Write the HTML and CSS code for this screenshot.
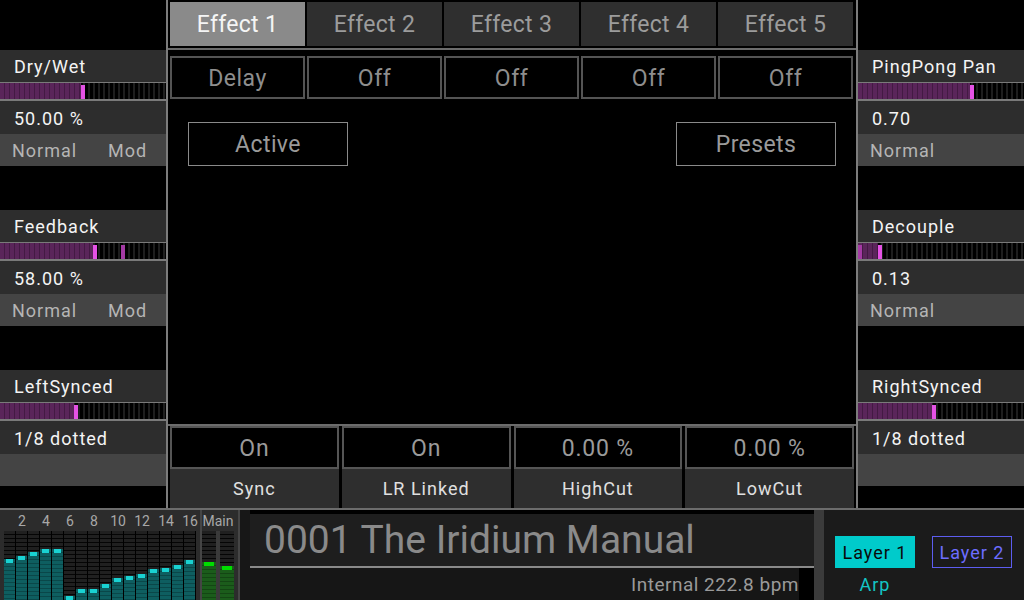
FILE: index.html
```html
<!DOCTYPE html>
<html>
<head>
<meta charset="utf-8">
<title>Effect</title>
<link rel="stylesheet" href="styles.css">
</head>
<body>
<div class="app">
  <div class="main">
    <aside class="side">
      <div class="param">
        <div class="p-label">Dry/Wet</div>
        <div class="slider"><div class="fill" style="width:81px"></div><div class="knob" style="left:81px"></div></div>
        <div class="p-value">50.00 %</div>
        <div class="p-mode"><span>Normal</span><span>Mod</span></div>
      </div>
      <div class="param">
        <div class="p-label">Feedback</div>
        <div class="slider"><div class="fill" style="width:93px"></div><div class="knob" style="left:93px"></div><div class="knob mod" style="left:121px"></div></div>
        <div class="p-value">58.00 %</div>
        <div class="p-mode"><span>Normal</span><span>Mod</span></div>
      </div>
      <div class="param">
        <div class="p-label">LeftSynced</div>
        <div class="slider"><div class="fill" style="width:74px"></div><div class="knob" style="left:74px"></div></div>
        <div class="p-value">1/8 dotted</div>
        <div class="p-mode"></div>
      </div>
    </aside>
    <div class="vline"></div>
    <section class="center">
      <nav class="tabs">
        <div class="tab active">Effect 1</div>
        <div class="tab">Effect 2</div>
        <div class="tab">Effect 3</div>
        <div class="tab">Effect 4</div>
        <div class="tab">Effect 5</div>
      </nav>
      <div class="rule"></div>
      <div class="types">
        <div class="type">Delay</div>
        <div class="type">Off</div>
        <div class="type">Off</div>
        <div class="type">Off</div>
        <div class="type">Off</div>
      </div>
      <div class="actions">
        <div class="btn">Active</div>
        <div class="btn">Presets</div>
      </div>
      <div class="spacer"></div>
      <div class="params">
        <div class="pcol"><div class="pval">On</div><div class="pname">Sync</div></div>
        <div class="pcol"><div class="pval">On</div><div class="pname">LR Linked</div></div>
        <div class="pcol"><div class="pval">0.00 %</div><div class="pname">HighCut</div></div>
        <div class="pcol"><div class="pval">0.00 %</div><div class="pname">LowCut</div></div>
      </div>
    </section>
    <div class="vline"></div>
    <aside class="side">
      <div class="param">
        <div class="p-label">PingPong Pan</div>
        <div class="slider"><div class="fill" style="width:112px"></div><div class="knob" style="left:112px"></div></div>
        <div class="p-value">0.70</div>
        <div class="p-mode"><span>Normal</span></div>
      </div>
      <div class="param">
        <div class="p-label">Decouple</div>
        <div class="slider"><div class="fill" style="width:20px"></div><div class="knob mod" style="left:0px"></div><div class="knob" style="left:20px"></div></div>
        <div class="p-value">0.13</div>
        <div class="p-mode"><span>Normal</span></div>
      </div>
      <div class="param">
        <div class="p-label">RightSynced</div>
        <div class="slider"><div class="fill" style="width:74px"></div><div class="knob" style="left:74px"></div></div>
        <div class="p-value">1/8 dotted</div>
        <div class="p-mode"></div>
      </div>
    </aside>
  </div>
  <div class="hline"></div>
  <footer class="bottom">
    <div class="meters">
      <div class="channels">
        <div class="nums">
          <span></span><span>2</span><span></span><span>4</span><span></span><span>6</span><span></span><span>8</span>
          <span></span><span>10</span><span></span><span>12</span><span></span><span>14</span><span></span><span>16</span>
        </div>
        <div class="bars">
          <div class="bar"><div class="lvl" style="height:41px"></div></div>
          <div class="bar"><div class="lvl" style="height:44px"></div></div>
          <div class="bar"><div class="lvl" style="height:48px"></div></div>
          <div class="bar"><div class="lvl" style="height:51px"></div></div>
          <div class="bar"><div class="lvl" style="height:51px"></div></div>
          <div class="bar"><div class="lvl" style="height:4px"></div></div>
          <div class="bar"><div class="lvl" style="height:11px"></div></div>
          <div class="bar"><div class="lvl" style="height:11px"></div></div>
          <div class="bar"><div class="lvl" style="height:16px"></div></div>
          <div class="bar"><div class="lvl" style="height:22px"></div></div>
          <div class="bar"><div class="lvl" style="height:24px"></div></div>
          <div class="bar"><div class="lvl" style="height:26px"></div></div>
          <div class="bar"><div class="lvl" style="height:31px"></div></div>
          <div class="bar"><div class="lvl" style="height:32px"></div></div>
          <div class="bar"><div class="lvl" style="height:35px"></div></div>
          <div class="bar"><div class="lvl" style="height:40px"></div></div>
        </div>
      </div>
      <div class="msep"></div>
      <div class="mainmeter">
        <div class="main-label">Main</div>
        <div class="mbars">
          <div class="mbar"><div class="mlvl" style="height:38px"></div></div>
          <div class="mbar"><div class="mlvl" style="height:34px"></div></div>
        </div>
      </div>
      <div class="msep"></div>
    </div>
    <div class="strip"></div>
    <div class="preset">
      <div class="preset-name">0001 The Iridium Manual</div>
      <div class="preset-info">Internal 222.8 bpm</div>
    </div>
    <div class="strip light"></div>
    <div class="layers">
      <div class="layer-row">
        <div class="layer on">Layer 1</div>
        <div class="layer off">Layer 2</div>
      </div>
      <div class="arp">Arp</div>
    </div>
  </footer>
</div>
</body>
</html>
```

FILE: styles.css
```css
* { box-sizing: border-box; margin: 0; padding: 0; }
html, body { width: 1024px; height: 600px; background: #000; overflow: hidden; }
body { font-family: Roboto, "Liberation Sans", sans-serif; color: #f0f0f0; }

.app { display: flex; flex-direction: column; width: 1024px; height: 600px; }
.main { display: flex; height: 508px; }
.hline { height: 2px; background: #6c6c6c; }
.vline { width: 2px; background: #7c7c7c; }

/* side parameter columns */
.side { width: 166px; padding-top: 50px; display: flex; flex-direction: column; gap: 44px; }
.param { display: flex; flex-direction: column; height: 116px; }
.p-label, .p-value {
  background: #2d2d2d; padding-left: 14px; display: flex; align-items: center;
  font-size: 18px; letter-spacing: 1px; color: #f4f4f4;
}
.p-label { height: 32px; }
.p-value { height: 33px; padding-top: 1px; }
.p-mode {
  height: 32px; background: #444; display: grid; grid-template-columns: 96px auto;
  align-items: center; padding-left: 12px; font-size: 18px; letter-spacing: 1px; color: #b5b5b5;
}
.slider {
  position: relative; height: 19px;
  border-top: 1px solid #7a7a7a; border-bottom: 2px solid #7a7a7a;
  background: repeating-linear-gradient(90deg, #000 0 3px, #1e1e1e 3px 5px);
}
.fill {
  height: 100%;
  background: repeating-linear-gradient(90deg, #5a255a 0 4px, #431a43 4px 5px);
}
.knob { position: absolute; top: 2px; height: 14px; width: 4px; background: #e552e5; }
.knob.mod { background: #a43aa4; }

/* center */
.center { width: 688px; display: flex; flex-direction: column; }
.tabs { display: flex; gap: 2px; padding: 2px 3px 0 2px; height: 46px; }
.tab {
  flex: 1; background: #2f2f2f; color: #9c9c9c; font-size: 23px;
  display: flex; align-items: center; justify-content: center; letter-spacing: 0.3px;
}
.tab.active { background: #8a8a8a; color: #f5f5f5; }
.rule { height: 2px; margin-top: 2px; background: #6c6c6c; }
.types { display: flex; gap: 2px; padding: 0 3px 0 2px; margin-top: 6px; height: 43px; }
.type {
  flex: 1; border: 2px solid #545454; color: #8e8e8e; font-size: 23px; letter-spacing: 0.5px;
  display: flex; align-items: center; justify-content: center; padding-top: 2px;
}
.actions { display: flex; justify-content: space-between; padding: 0 20px; margin-top: 23px; }
.btn {
  width: 160px; height: 44px; border: 1px solid #8a8a8a; color: #9a9a9a; font-size: 23px;
  letter-spacing: 0.4px; display: flex; align-items: center; justify-content: center;
}
.spacer { flex: 1; }
.params {
  display: grid; grid-template-columns: repeat(4, 1fr); column-gap: 3px;
  padding: 0 2px; border-top: 2px solid #6c6c6c;
}
.pcol { display: flex; flex-direction: column; }
.pval {
  height: 43px; border: 2px solid #555; color: #9a9a9a; font-size: 23px; letter-spacing: 0.8px;
  display: flex; align-items: center; justify-content: center; padding-top: 1px;
}
.pname {
  height: 39px; background: #2e2e2e; color: #e0e0e0; font-size: 18px; letter-spacing: 1px;
  display: flex; align-items: center; justify-content: center;
}

/* bottom */
.bottom { height: 90px; display: flex; }
.meters { width: 240px; background: #2c2c2c; display: flex; padding-left: 4px; }
.channels { width: 192px; display: flex; flex-direction: column; }
.nums { height: 21px; display: flex; }
.nums span {
  width: 12px; display: flex; justify-content: center; align-items: center;
  font-size: 14px; color: #a8a8a8;
}
.bars { height: 69px; display: flex; background: #000; }
.bar {
  width: 12px; border-right: 1px solid #000; display: flex; flex-direction: column; justify-content: flex-end;
  background: repeating-linear-gradient(to bottom, #202020 0 3px, #050505 3px 4px);
}
.lvl { background: repeating-linear-gradient(to bottom, #0e5e60 0 3px, #0a4749 3px 4px); }
.lvl::before { content: ""; display: block; height: 4px; margin: 0 2px; background: #19d2d2; }
.msep { width: 6px; border-right: 2px solid #454545; }
.mainmeter { width: 32px; display: flex; flex-direction: column; }
.main-label {
  height: 21px; display: flex; align-items: center; justify-content: center;
  font-size: 14px; color: #a8a8a8;
}
.mbars { height: 69px; display: flex; gap: 4px; background: #3a3a3a; }
.mbar {
  width: 14px; display: flex; flex-direction: column; justify-content: flex-end;
  background: repeating-linear-gradient(to bottom, #202020 0 3px, #050505 3px 4px);
}
.mlvl { background: repeating-linear-gradient(to bottom, #1b5c1b 0 3px, #144614 3px 4px); }
.mlvl::before { content: ""; display: block; height: 4px; margin: 0 2px; background: #00dc00; }

.strip { width: 10px; background: #171717; }
.strip.light { background: #3b3b3b; }
.preset { width: 564px; display: flex; flex-direction: column; background: #000; }
.preset-name {
  margin-top: 4px; height: 54px; background: #1e1e1e; border-bottom: 2px solid #8a8a8a;
  padding-left: 14px; display: flex; align-items: center; font-size: 39px; color: #8a8a8a;
}
.preset-info {
  height: 32px; margin-right: 15px; background: #161616; display: flex; align-items: center;
  justify-content: flex-end; font-size: 19px; letter-spacing: 0.5px; color: #9a9a9a;
}
.layers { flex: 1; background: #1b1b1b; padding: 26px 0 0 11px; }
.layer-row { display: flex; gap: 17px; }
.layer {
  width: 80px; height: 32px; font-size: 18px; letter-spacing: 1px;
  display: flex; align-items: center; justify-content: center;
}
.layer.on { background: #00cbcb; color: #0a0a0a; }
.layer.off { border: 1px solid #5d5df0; color: #6d6dff; }
.arp {
  width: 80px; margin-top: 7px; line-height: 20px; text-align: center;
  font-size: 18px; letter-spacing: 1px; color: #13c6c6;
}
```
